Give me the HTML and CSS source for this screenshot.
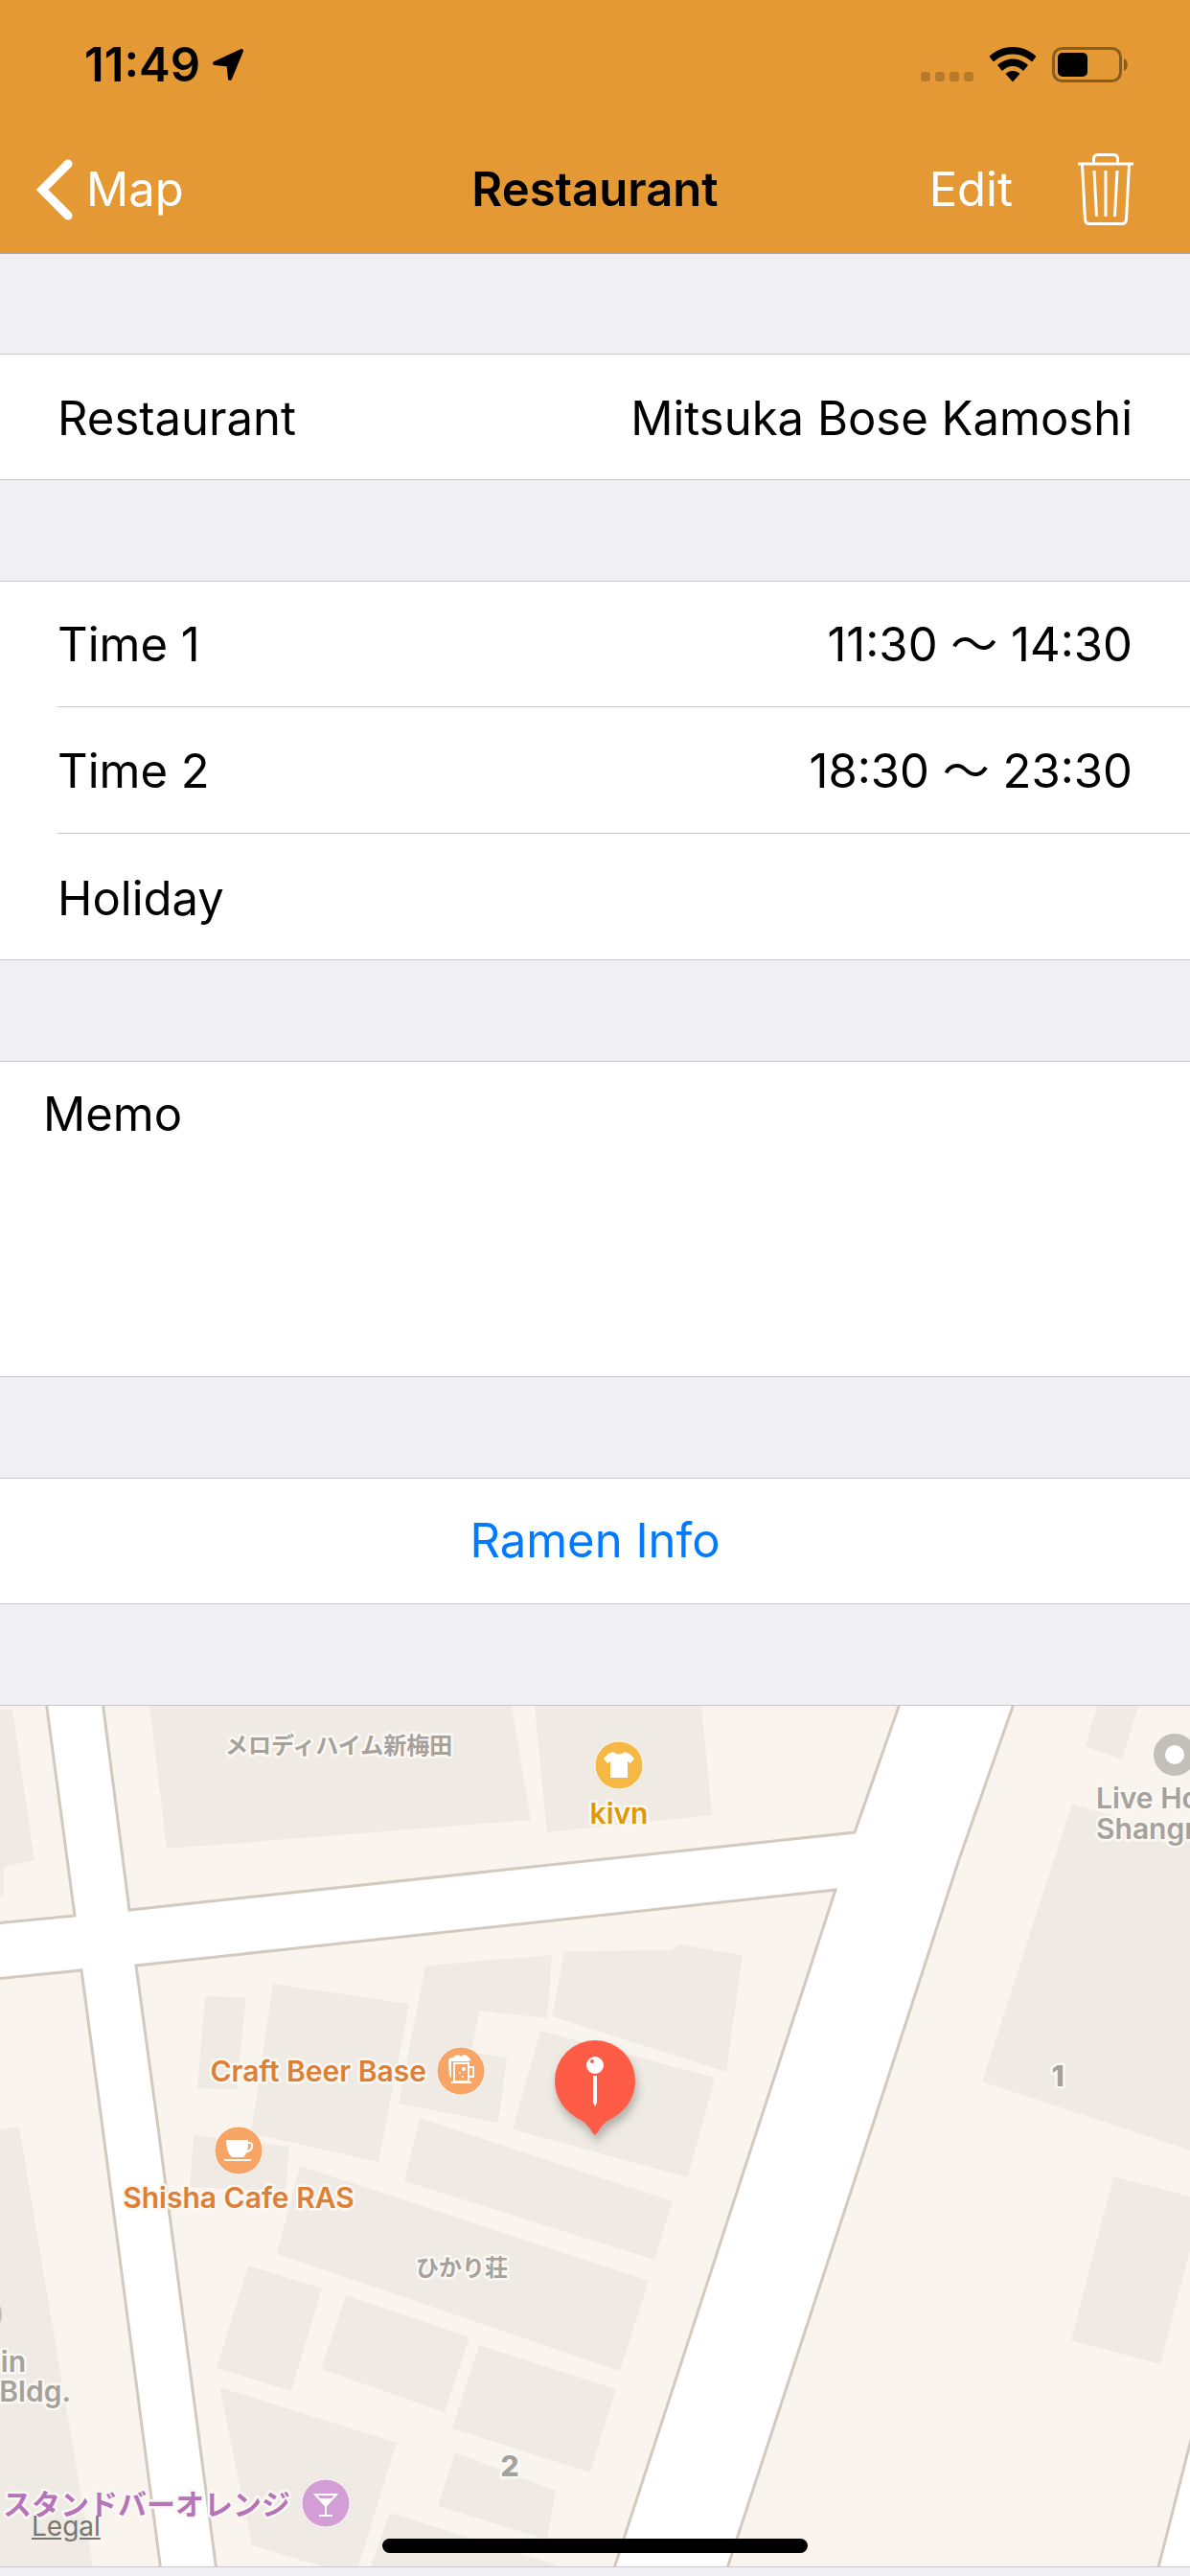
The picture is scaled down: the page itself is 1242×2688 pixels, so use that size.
FILE: index.html
```
<!DOCTYPE html>
<html lang="en">
<head>
    <meta charset="UTF-8">
    <meta name="viewport" content="width=device-width, initial-scale=1.0">
    <title>Restaurant</title>
    <link rel="stylesheet" href="styles.css">
</head>
<body>
    <header class="header">
        <div class="status-bar">
            <div class="status-left">
                <span class="time">11:49</span>
                <svg class="location-icon" width="34" height="34" viewBox="0 0 34 34" aria-hidden="true">
                    <path d="M31 2 L19 31 L17.500 16.500 L3 15 Z" fill="#000" stroke="#000" stroke-width="4" stroke-linejoin="round"/>
                </svg>
            </div>
            <div class="status-right">
                <div class="signal"><i></i><i></i><i></i><i></i></div>
                <svg width="50" height="37" viewBox="0 0 50 37" aria-hidden="true">
                    <path d="M25 0 C35 0 43.500 4 49.500 10 L45 15.500 C39.500 10.500 33 7.500 25 7.500 C17 7.500 10.500 10.500 5 15.500 L0.500 10 C6.500 4 15 0 25 0 Z"/>
                    <path d="M25 12.500 C31 12.500 36.500 15 41 19 L36 25 C33 22 29.500 20 25 20 C20.500 20 17 22 14 25 L9 19 C13.500 15 19 12.500 25 12.500 Z"/>
                    <path d="M25 25 C28 25 30.500 26.200 32.500 28 L25 36.500 L17.500 28 C19.500 26.200 22 25 25 25 Z"/>
                </svg>
                <svg width="80" height="38" viewBox="0 0 80 38" aria-hidden="true">
                    <rect x="1.500" y="1.500" width="70" height="34" rx="9" fill="none" stroke="#000" stroke-opacity=".4" stroke-width="3"/>
                    <path d="M75 12 C80 14 80 23 75 25 Z" fill-opacity=".4"/>
                    <rect x="6" y="6" width="31" height="25" rx="5"/>
                </svg>
            </div>
        </div>
        <nav class="nav-bar">
            <a class="back" href="#map">
                <svg width="38" height="64" viewBox="0 0 38 64" aria-hidden="true">
                    <path d="M33 5 L6 32 L33 59" fill="none" stroke="#fff" stroke-width="9" stroke-linecap="round" stroke-linejoin="miter"/>
                </svg>
                <span>Map</span>
            </a>
            <h1>Restaurant</h1>
            <div class="nav-actions">
                <button type="button">Edit</button>
                <button type="button" aria-label="Delete">
                    <svg width="58" height="76" viewBox="0 0 58 76" fill="none" stroke="#fff" stroke-width="3" aria-hidden="true">
                        <path d="M0 11 H58"/>
                        <path d="M16.500 11 V6 Q16.500 1.500 21 1.500 H37 Q41.500 1.500 41.500 6 V11"/>
                        <path d="M4.500 12 L7.500 69 Q8 73.500 12 73.500 H46 Q50 73.500 50.500 69 L53.500 12"/>
                        <path d="M17 18 L19.500 66 M29 18 V66 M41 18 L38.500 66"/>
                    </svg>
                </button>
            </div>
        </nav>
    </header>

    <main>
        <section class="group">
            <div class="row"><span>Restaurant</span><span>Mitsuka Bose Kamoshi</span></div>
        </section>

        <section class="group">
            <div class="row"><span>Time 1</span><span>11:30 ～ 14:30</span></div>
            <div class="row"><span>Time 2</span><span>18:30 ～ 23:30</span></div>
            <div class="row"><span>Holiday</span><span></span></div>
        </section>

        <section class="group">
            <textarea class="memo" aria-label="Memo">Memo</textarea>
        </section>

        <section class="group">
            <button class="info-button" type="button">Ramen Info</button>
        </section>

        <section class="map" id="map">
            <svg class="map-canvas" viewBox="0 0 1242 898" preserveAspectRatio="xMidYMid slice">
                <!-- city blocks, the white between them is the road -->
                <g class="blocks">
                    <path d="M-5 -5 H48 L78 219 L-5 227 Z"/>
                    <path d="M107 -5 L135 213 L892 132 L940 -5 Z"/>
                    <path d="M-5 285 L85 276 L107 440 L168 903 H-5 Z"/>
                    <path d="M142 271 L872 192 L640 903 H226 L165 440 Z"/>
                    <path d="M1059 -5 L1000 163 L910 440 L758 903 H1208 L1247 750 V-5 Z"/>
                </g>

                <g class="buildings">
                    <path d="M0 4 H13 L36 161 L4 168 V199 H0 Z"/>
                    <path d="M156 0 H534 L554 119 L174 149 Z"/>
                    <path d="M558 0 H732 L743 114 L571 132 Z"/>
                    <path d="M214 303 L257 304 L247 400 L206 399 Z"/>
                    <path d="M285 290 L427 311 L395 476 L262 446 Z"/>
                    <path d="M444 271 L576 260 L571 326 L500 318 L492 362 L529 367 L520 435 L416 415 Z"/>
                    <path d="M589 256 L700 255 L710 249 L775 260 L758 382 L576 324 Z"/>
                    <path d="M564 339 L746 388 L718 492 L535 442 Z"/>
                    <path d="M438 430 L702 517 L683 578 L422 496 Z"/>
                    <path d="M202 448 L302 460 L298 507 L198 502 Z"/>
                    <path d="M313 480 L677 600 L647 694 L289 572 Z"/>
                    <path d="M259 584 L336 608 L304 715 L226 691 Z"/>
                    <path d="M361 615 L490 659 L464 737 L335 692 Z"/>
                    <path d="M500 667 L643 713 L616 800 L472 754 Z"/>
                    <path d="M229 711 L414 769 L374 898 H337 L263 876 Z"/>
                    <path d="M475 779 L580 819 L571 870 L457 835 Z"/>
                    <path d="M407 842 L579 896 V898 H387 Z"/>
                    <path d="M0 442 L20 439 L97 898 H0 Z"/>
                    <path d="M1145 0 H1188 L1171 56 L1133 42 Z"/>
                    <path d="M1119 102 L1242 140 V464 L1025 392 Z"/>
                    <path d="M1162 491 L1242 512 V568 L1211 687 L1118 662 Z"/>
                </g>

                <g class="label label-place">
                    <text class="ja" x="235" y="50">メロディハイム新梅田</text>
                    <text class="ja" x="434" y="595">ひかり荘</text>
                    <text x="1144" y="107">Live House</text>
                    <text x="1144" y="139">Shangri-La</text>
                    <text x="27" y="695" text-anchor="end">in</text>
                    <text x="74" y="726" text-anchor="end">Bldg.</text>
                    <text class="block-no" x="1104" y="397">1</text>
                    <text class="block-no" x="532" y="804">2</text>
                </g>
                <circle class="dot-place" cx="1226" cy="51" r="16"/>
                <circle class="dot-place" cx="-20" cy="635" r="16"/>

                <!-- clothes shop -->
                <g transform="translate(646 62)">
                    <circle class="poi poi-shop" r="25"/>
                    <path fill="#fff" d="M-6 -14 Q0 -9 6 -14 L11 -12 L16 -7 L12 -2 L9 -4 V13 H-9 V-4 L-12 -2 L-16 -7 L-11 -12 Z"/>
                </g>
                <text class="label label-shop" x="646" y="123" text-anchor="middle">kivn</text>

                <!-- beer bar -->
                <text class="label label-food" x="445" y="392" text-anchor="end">Craft Beer Base</text>
                <g transform="translate(481 381)">
                    <circle class="poi poi-food" r="25"/>
                    <path fill="#fff" d="M-13 -10 C-13 -14 -9 -14 -8 -14 C-6 -17 -2 -17 0 -15 C3 -18 7 -17 8 -14 C11 -13 10 -10 8 -10 H-10 V6 Q-11 8 -12 5 Z"/>
                    <rect x="-7" y="-8" width="15" height="19" fill="none" stroke="#fff" stroke-width="2"/>
                    <path d="M9 -4 H13 V6 H9 M-10 12 H11" fill="none" stroke="#fff" stroke-width="2"/>
                    <circle cx="3" cy="-2" r="2" fill="#fff"/>
                    <circle cx="-1" cy="2" r="1" fill="#fff"/>
                    <circle cx="2" cy="6" r="1" fill="#fff"/>
                </g>

                <!-- cafe -->
                <g transform="translate(249 464)">
                    <circle class="poi poi-food" r="25"/>
                    <path fill="#fff" d="M-13 -11 H10 Q11 2 5 7 H-7 Q-13 2 -13 -11 Z M-16 9 H14 L12 11 H-14 Z"/>
                    <path d="M9 -8 H11 Q15 -8 14 -4 Q13 1 8 1" fill="none" stroke="#fff" stroke-width="2"/>
                </g>
                <text class="label label-food" x="249" y="524" text-anchor="middle">Shisha Cafe RAS</text>

                <!-- cocktail bar -->
                <text class="label label-bar ja" x="303" y="844" text-anchor="end">スタンドバーオレンジ</text>
                <g transform="translate(340 832)">
                    <circle class="poi poi-bar" r="25"/>
                    <path d="M-11 -9 H11 L0 3 Z M0 3 V12 M-7 13 H7" fill="none" stroke="#fff" stroke-width="2"/>
                    <path d="M-7 -5 H7 L0 3 Z" fill="#fff"/>
                </g>

                <g class="pin" transform="translate(621 391)">
                    <path fill="#ff5c47" d="M0 -42 A42 42 0 0 1 42 0 C42 19 31 33 15 41 C8 45 5 51 2 55 Q0 58 -2 55 C-5 51 -8 45 -15 41 C-31 33 -42 19 -42 0 A42 42 0 0 1 0 -42 Z"/>
                    <circle cy="-16" r="9" fill="#fff"/>
                    <circle cx="-3" cy="-20" r="2" fill="#ff5c47"/>
                    <path fill="#fff" d="M-2 -5 H2 V23 L0 27 L-2 23 Z"/>
                </g>
            </svg>
            <a class="legal" href="#legal">Legal</a>
        </section>
    </main>

    <div class="home-indicator"></div>
</body>
</html>
```
FILE: styles.css
```
* {
    box-sizing: border-box;
}

body {
    margin: 0;
    background-color: #efeff4;
    color: #000;
    font-family: Inter, "Noto Sans CJK JP", sans-serif;
    font-size: 49px;
    line-height: 60px;
}

button, textarea {
    font: inherit;
    border: none;
    background: none;
    padding: 0;
}

a {
    text-decoration: none;
}

svg {
    display: block;
}

/* top bar */
.header {
    background-color: #e59935;
    box-shadow: 0 1px 0 #a7a7aa;
}

.status-bar {
    display: flex;
    justify-content: space-between;
    height: 132px;
    padding: 38px 64px 0 88px;
}

.status-left {
    display: flex;
    align-items: flex-start;
    gap: 12px;
}

.time {
    font-size: 49px;
    font-weight: 600;
}

.location-icon {
    margin-top: 13px;
}

.status-right {
    display: flex;
    align-items: flex-start;
    gap: 16px;
    padding-top: 11px;
}

.signal {
    display: flex;
    gap: 5px;
    padding-top: 26px;
}

.signal i {
    width: 10px;
    height: 10px;
    border-radius: 3px;
    background-color: rgba(0, 0, 0, 0.2);
}

.nav-bar {
    display: grid;
    grid-template-columns: 1fr auto 1fr;
    align-items: center;
    height: 132px;
    padding: 0 38px;
}

.nav-bar h1 {
    margin: 0;
    font-size: 49px;
    font-weight: 600;
}

.back {
    display: flex;
    align-items: center;
    gap: 14px;
    color: #fff;
}

.nav-actions {
    display: flex;
    justify-content: flex-end;
    align-items: center;
    gap: 68px;
    padding-right: 21px;
}

.nav-actions button {
    color: #fff;
}

/* table groups */
.group {
    margin-top: 105px;
    background-color: #fff;
    box-shadow: inset 0 1px 0 #c8c7cc, inset 0 -1px 0 #c8c7cc;
}

.row {
    display: flex;
    justify-content: space-between;
    align-items: center;
    min-height: 132px;
    margin-left: 60px;
    padding-top: 3px;
    padding-right: 60px;
}

.row:not(:last-child) {
    border-bottom: 1px solid #c8c7cc;
}

.memo {
    display: block;
    width: 100%;
    height: 330px;
    padding: 26px 45px;
    resize: none;
    outline: none;
    color: #000;
}

.info-button {
    display: block;
    width: 100%;
    min-height: 132px;
    color: #007aff;
}

/* map */
.map {
    position: relative;
    margin-top: 105px;
    margin-bottom: 9px;
    border-top: 1px solid #c8c7cc;
    border-bottom: 1px solid #c8c7cc;
    background-color: #fff;
    overflow: hidden;
}

.map-canvas {
    width: 100%;
    height: 898px;
}

.blocks {
    fill: #f9f4ed;
    stroke: #d3c9be;
    stroke-width: 3px;
}

.buildings {
    fill: #efebe4;
}

.label {
    font-size: 30px;
    font-weight: 600;
    paint-order: stroke;
    stroke: #fbf8f4;
    stroke-width: 5px;
    stroke-linejoin: round;
}

.label-place {
    fill: #a5a19b;
}

.label-place .ja {
    font-size: 24px;
}

.label .block-no {
    font-weight: 800;
    text-anchor: middle;
}

.label-shop {
    fill: #dd9908;
}

.label-food {
    fill: #dd8036;
}

.label-bar {
    fill: #b574b8;
}

.dot-place {
    fill: #fff;
    stroke: #c3bfb9;
    stroke-width: 12px;
}

.poi {
    stroke: #fbf6ef;
    stroke-width: 1px;
}

.poi-shop {
    fill: #f6b844;
}

.poi-food {
    fill: #f7a566;
}

.poi-bar {
    fill: #d39ed6;
}

.pin {
    filter: drop-shadow(2px 7px 5px rgba(0, 0, 0, 0.25));
}

.legal {
    position: absolute;
    left: 33px;
    bottom: 22px;
    font-size: 28px;
    line-height: 40px;
    color: #777672;
    text-decoration: underline;
}

.home-indicator {
    position: fixed;
    left: 50%;
    bottom: 24px;
    width: 444px;
    height: 15px;
    margin-left: -222px;
    border-radius: 8px;
    background-color: #000;
}
```
